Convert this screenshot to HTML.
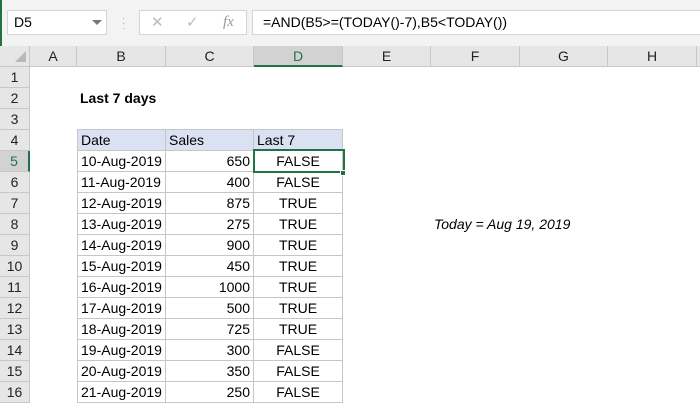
<!DOCTYPE html><html><head><style>
*{margin:0;padding:0;box-sizing:border-box}
body{width:700px;height:400px;overflow:hidden;background:#fff;font-family:"Liberation Sans",sans-serif;position:relative;color:#000}
.a{position:absolute}
.tb{left:0;top:0;width:700px;height:46px;background:#f3f3f3;border-left:2px solid #217346}
.box{background:#fff;border:1px solid #d4d4d4}
.ch{top:46px;height:21px;background:#e6e6e6;border-right:1px solid #c8c8c8;border-bottom:1px solid #c8c8c8;font-size:14px;text-align:center;line-height:21px;color:#222}
.rh{left:0;width:30px;height:21px;background:#e6e6e6;border-bottom:1px solid #c8c8c8;border-right:1px solid #c8c8c8;font-size:14px;text-align:center;line-height:21px;color:#222}
.c{height:21px;font-size:14px;line-height:21px;border-right:1px solid #c6c6c6;border-bottom:1px solid #c6c6c6;padding:0 3px;white-space:nowrap}
.B{left:77px;width:89px;border-left:1px solid #c6c6c6}
.C{left:166px;width:88px;text-align:right}
.D{left:254px;width:89px;text-align:center}
</style></head><body>
<div class="a tb"></div>
<div class="a box" style="left:7px;top:10px;width:100px;height:25px;font-size:14px;line-height:23px;padding-left:6px">D5</div>
<div class="a" style="left:92px;top:20px;width:0;height:0;border-left:5px solid transparent;border-right:5px solid transparent;border-top:5px solid #777"></div>
<div class="a" style="left:122px;top:16px;color:#aaa;font-size:10px;line-height:5px">·<br>·<br>·</div>
<div class="a box" style="left:139px;top:10px;width:108px;height:25px;color:#bbb;font-size:15px;line-height:23px"><span style="position:absolute;left:11px">✕</span><span style="position:absolute;left:46px">✓</span><span style="position:absolute;left:83px;font-family:'Liberation Serif',serif;font-style:italic;color:#999">fx</span></div>
<div class="a box" style="left:252px;top:10px;width:450px;height:25px;font-size:14px;line-height:23px;padding-left:10px">=AND(B5&gt;=(TODAY()-7),B5&lt;TODAY())</div>
<div class="a" style="left:0;top:46px;width:30px;height:21px;background:#e6e6e6;border-right:1px solid #c8c8c8;border-bottom:1px solid #c8c8c8"></div>
<div class="a" style="left:15px;top:51px;width:0;height:0;border-left:11px solid transparent;border-bottom:11px solid #b8b8b8"></div>
<div class="a ch" style="left:30px;width:47px">A</div>
<div class="a ch" style="left:77px;width:89px">B</div>
<div class="a ch" style="left:166px;width:88px">C</div>
<div class="a ch" style="left:254px;width:89px;background:#d2d2d2;color:#217346;border-bottom:2px solid #217346">D</div>
<div class="a ch" style="left:343px;width:88px">E</div>
<div class="a ch" style="left:431px;width:89px">F</div>
<div class="a ch" style="left:520px;width:88px">G</div>
<div class="a ch" style="left:608px;width:89px">H</div>
<div class="a ch" style="left:697px;width:10px"></div>
<div class="a rh" style="top:67px">1</div><div class="a rh" style="top:88px">2</div><div class="a rh" style="top:109px">3</div><div class="a rh" style="top:130px">4</div>
<div class="a rh" style="top:151px;background:#d2d2d2;color:#217346;border-right:2px solid #217346">5</div>
<div class="a rh" style="top:172px">6</div><div class="a rh" style="top:193px">7</div><div class="a rh" style="top:214px">8</div><div class="a rh" style="top:235px">9</div><div class="a rh" style="top:256px">10</div><div class="a rh" style="top:277px">11</div><div class="a rh" style="top:298px">12</div><div class="a rh" style="top:319px">13</div><div class="a rh" style="top:340px">14</div><div class="a rh" style="top:361px">15</div><div class="a rh" style="top:382px">16</div>
<div class="a" style="left:80px;top:88px;line-height:21px;font-size:14px;font-weight:bold">Last 7 days</div>
<div class="a" style="left:434px;top:214px;line-height:21px;font-size:14px;font-style:italic">Today = Aug 19, 2019</div>
<div class="a" style="left:77px;top:129px;width:266px;height:1px;background:#c6c6c6"></div>
<div class="a c B" style="top:130px;background:#d9e1f2">Date</div><div class="a c C" style="top:130px;background:#d9e1f2;text-align:left">Sales</div><div class="a c D" style="top:130px;background:#d9e1f2;text-align:left">Last 7</div>
<div class="a c B" style="top:151px">10-Aug-2019</div><div class="a c C" style="top:151px">650</div><div class="a c D" style="top:151px">FALSE</div>
<div class="a c B" style="top:172px">11-Aug-2019</div><div class="a c C" style="top:172px">400</div><div class="a c D" style="top:172px">FALSE</div>
<div class="a c B" style="top:193px">12-Aug-2019</div><div class="a c C" style="top:193px">875</div><div class="a c D" style="top:193px">TRUE</div>
<div class="a c B" style="top:214px">13-Aug-2019</div><div class="a c C" style="top:214px">275</div><div class="a c D" style="top:214px">TRUE</div>
<div class="a c B" style="top:235px">14-Aug-2019</div><div class="a c C" style="top:235px">900</div><div class="a c D" style="top:235px">TRUE</div>
<div class="a c B" style="top:256px">15-Aug-2019</div><div class="a c C" style="top:256px">450</div><div class="a c D" style="top:256px">TRUE</div>
<div class="a c B" style="top:277px">16-Aug-2019</div><div class="a c C" style="top:277px">1000</div><div class="a c D" style="top:277px">TRUE</div>
<div class="a c B" style="top:298px">17-Aug-2019</div><div class="a c C" style="top:298px">500</div><div class="a c D" style="top:298px">TRUE</div>
<div class="a c B" style="top:319px">18-Aug-2019</div><div class="a c C" style="top:319px">725</div><div class="a c D" style="top:319px">TRUE</div>
<div class="a c B" style="top:340px">19-Aug-2019</div><div class="a c C" style="top:340px">300</div><div class="a c D" style="top:340px">FALSE</div>
<div class="a c B" style="top:361px">20-Aug-2019</div><div class="a c C" style="top:361px">350</div><div class="a c D" style="top:361px">FALSE</div>
<div class="a c B" style="top:382px">21-Aug-2019</div><div class="a c C" style="top:382px">250</div><div class="a c D" style="top:382px">FALSE</div>
<div class="a" style="left:253px;top:149px;width:92px;height:24px;border:2px solid #217346"></div>
<div class="a" style="left:340px;top:170px;width:6px;height:6px;background:#217346;border:1px solid #fff"></div>
</body></html>
